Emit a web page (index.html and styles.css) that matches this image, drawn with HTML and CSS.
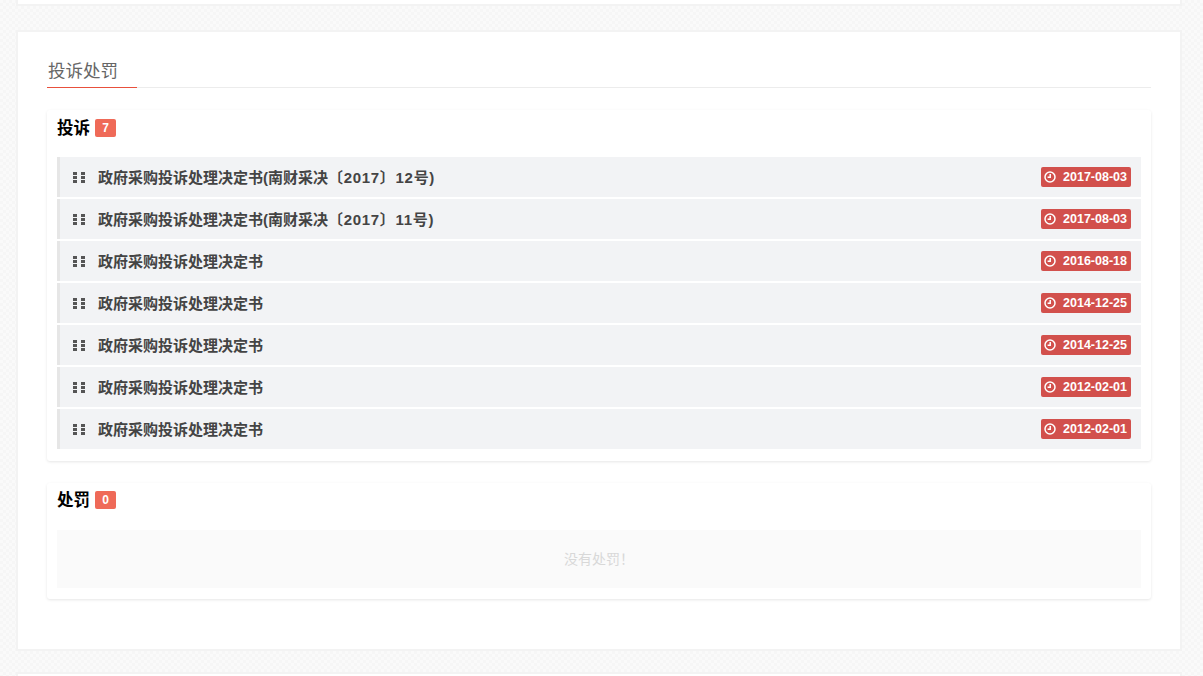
FILE: index.html
```html
<!DOCTYPE html>
<html lang="zh-CN">
<head>
    <meta charset="UTF-8">
    <title>投诉处罚</title>
    <link rel="stylesheet" href="styles.css">
</head>
<body>
    <div class="card card-top"></div>

    <section class="card card-main">
        <h2 class="section-title"><span>投诉处罚</span></h2>

        <!-- 投诉 -->
        <div class="panel panel-complaints">
            <h3 class="panel-title">投诉 <span class="badge">7</span></h3>
            <ul class="rows">
                <li class="row">
                    <svg class="grip" viewBox="0 0 12 11"><path d="M0 0h4v3H0zM8 0h4v3H8zM0 4h4v3H0zM8 4h4v3H8zM0 8h4v3H0zM8 8h4v3H8z"/></svg>
                    <a class="row-title">政府采购投诉处理决定书(南财采决<span class="doc-no">〔2017〕12号)</span></a>
                    <span class="date"><svg class="clock" viewBox="0 0 12 12"><circle cx="6" cy="6" r="5"/><path d="M6.2 3v3.3H3.6"/></svg>2017-08-03</span>
                </li>
                <li class="row">
                    <svg class="grip" viewBox="0 0 12 11"><path d="M0 0h4v3H0zM8 0h4v3H8zM0 4h4v3H0zM8 4h4v3H8zM0 8h4v3H0zM8 8h4v3H8z"/></svg>
                    <a class="row-title">政府采购投诉处理决定书(南财采决<span class="doc-no">〔2017〕11号)</span></a>
                    <span class="date"><svg class="clock" viewBox="0 0 12 12"><circle cx="6" cy="6" r="5"/><path d="M6.2 3v3.3H3.6"/></svg>2017-08-03</span>
                </li>
                <li class="row">
                    <svg class="grip" viewBox="0 0 12 11"><path d="M0 0h4v3H0zM8 0h4v3H8zM0 4h4v3H0zM8 4h4v3H8zM0 8h4v3H0zM8 8h4v3H8z"/></svg>
                    <a class="row-title">政府采购投诉处理决定书</a>
                    <span class="date"><svg class="clock" viewBox="0 0 12 12"><circle cx="6" cy="6" r="5"/><path d="M6.2 3v3.3H3.6"/></svg>2016-08-18</span>
                </li>
                <li class="row">
                    <svg class="grip" viewBox="0 0 12 11"><path d="M0 0h4v3H0zM8 0h4v3H8zM0 4h4v3H0zM8 4h4v3H8zM0 8h4v3H0zM8 8h4v3H8z"/></svg>
                    <a class="row-title">政府采购投诉处理决定书</a>
                    <span class="date"><svg class="clock" viewBox="0 0 12 12"><circle cx="6" cy="6" r="5"/><path d="M6.2 3v3.3H3.6"/></svg>2014-12-25</span>
                </li>
                <li class="row">
                    <svg class="grip" viewBox="0 0 12 11"><path d="M0 0h4v3H0zM8 0h4v3H8zM0 4h4v3H0zM8 4h4v3H8zM0 8h4v3H0zM8 8h4v3H8z"/></svg>
                    <a class="row-title">政府采购投诉处理决定书</a>
                    <span class="date"><svg class="clock" viewBox="0 0 12 12"><circle cx="6" cy="6" r="5"/><path d="M6.2 3v3.3H3.6"/></svg>2014-12-25</span>
                </li>
                <li class="row">
                    <svg class="grip" viewBox="0 0 12 11"><path d="M0 0h4v3H0zM8 0h4v3H8zM0 4h4v3H0zM8 4h4v3H8zM0 8h4v3H0zM8 8h4v3H8z"/></svg>
                    <a class="row-title">政府采购投诉处理决定书</a>
                    <span class="date"><svg class="clock" viewBox="0 0 12 12"><circle cx="6" cy="6" r="5"/><path d="M6.2 3v3.3H3.6"/></svg>2012-02-01</span>
                </li>
                <li class="row">
                    <svg class="grip" viewBox="0 0 12 11"><path d="M0 0h4v3H0zM8 0h4v3H8zM0 4h4v3H0zM8 4h4v3H8zM0 8h4v3H0zM8 8h4v3H8z"/></svg>
                    <a class="row-title">政府采购投诉处理决定书</a>
                    <span class="date"><svg class="clock" viewBox="0 0 12 12"><circle cx="6" cy="6" r="5"/><path d="M6.2 3v3.3H3.6"/></svg>2012-02-01</span>
                </li>
            </ul>
        </div>

        <!-- 处罚 -->
        <div class="panel panel-penalties">
            <h3 class="panel-title">处罚 <span class="badge">0</span></h3>
            <div class="empty">没有处罚！</div>
        </div>
    </section>

    <div class="card card-bottom"></div>
</body>
</html>
```

FILE: styles.css
```css
* {
    box-sizing: border-box;
}

html,
body {
    height: 676px;
    overflow: hidden;
}

body {
    margin: 0;
    padding: 0 21px 0 16px;
    font-family: "Liberation Sans", "Noto Sans CJK SC", sans-serif;
    background-color: #fafafa;
    background-image:
        linear-gradient(45deg, #f6f6f6 25%, transparent 25%, transparent 75%, #f6f6f6 75%),
        linear-gradient(45deg, #f6f6f6 25%, transparent 25%, transparent 75%, #f6f6f6 75%);
    background-size: 6px 6px;
    background-position: 0 0, 3px 3px;
}

.card {
    background-color: #fff;
    border: 2px solid #f3f3f3;
}

.card-top {
    height: 7px;
    margin-top: -1px;
    border-top: none;
}

.card-main {
    height: 621px;
    margin-top: 24px;
    padding: 24px 29px 0;
}

.card-bottom {
    height: 10px;
    margin-top: 21px;
}

.section-title {
    display: flex;
    margin: 0 0 22px;
    height: 32px;
    border-bottom: 1px solid #ececec;
    font-size: 17.5px;
    font-weight: normal;
    line-height: 30px;
    color: #666;
}

.section-title span {
    width: 90px;
    height: 32px;
    padding-left: 1px;
    border-bottom: 1px solid #e8503c;
}

.panel {
    width: 1104px;
    padding: 0 10px;
    background-color: #fff;
    border-radius: 3px;
    box-shadow: 0 1px 3px rgba(0, 0, 0, 0.1);
}

.panel-complaints {
    height: 351px;
}

.panel-penalties {
    height: 116px;
    margin-top: 22px;
}

.panel-title {
    display: flex;
    align-items: center;
    gap: 5px;
    height: 47px;
    margin: 0;
    padding-bottom: 13px;
    font-size: 16.5px;
    font-weight: bold;
    color: #000;
}

.panel-penalties .panel-title {
    padding-bottom: 15px;
}

.badge {
    width: 21px;
    height: 18px;
    margin-top: 2px;
    border-radius: 2px;
    background-color: #ef6a58;
    color: #fff;
    font-size: 12px;
    line-height: 18px;
    text-align: center;
}

.rows {
    margin: 0;
    padding: 0;
    list-style: none;
}

.row {
    display: flex;
    align-items: center;
    height: 40px;
    margin-bottom: 2px;
    padding: 0 10px 0 13px;
    background-color: #f2f3f5;
    border-left: 3px solid #e6e6e6;
}

.grip {
    width: 12px;
    height: 11px;
    margin-right: 13px;
    fill: #555;
}

.row-title {
    flex: 1;
    padding-bottom: 2px;
    font-size: 15px;
    font-weight: bold;
    color: #444;
}

.doc-no {
    letter-spacing: 0.7px;
}

.date {
    display: flex;
    align-items: center;
    height: 20px;
    padding: 0 4px 0 3px;
    border-radius: 2px;
    background-color: #d2504c;
    color: #fff;
    font-size: 12.5px;
    font-weight: bold;
}

.clock {
    width: 12px;
    height: 12px;
    margin-right: 7px;
    fill: none;
    stroke: #fff;
    stroke-width: 1.5;
}

.empty {
    height: 58px;
    background-color: #fafafa;
    color: #d8d8d8;
    font-size: 14px;
    line-height: 58px;
    text-align: center;
}
```
